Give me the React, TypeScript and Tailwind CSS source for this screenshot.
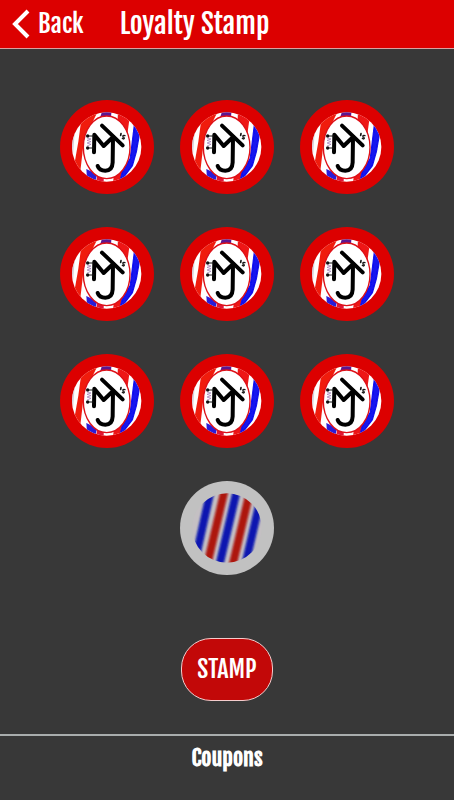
import React from "react";

const FONT =
  "font-['Fjalla_One','Liberation_Sans_Narrow','Roboto_Condensed','Open_Sans_Condensed','Roboto',sans-serif]";

function CollectedStamp({ id }: { id: number }) {
  const clip = `stamp-clip-${id}`;
  const soft = `stamp-soft-${id}`;
  return (
    <svg viewBox="17 15 282 282" className="size-[94px]" role="img" aria-label="Collected stamp">
      <defs>
        <clipPath id={clip}>
          <circle cx="157" cy="156" r="104" />
        </clipPath>
        <filter id={soft} x="-20%" y="-20%" width="140%" height="140%">
          <feGaussianBlur stdDeviation="2" />
        </filter>
      </defs>
      <circle cx="158" cy="156" r="141" fill="#dc0000" />
      <g clipPath={`url(#${clip})`}>
        <rect x="50" y="50" width="216" height="216" fill="#fff" />
        <g filter={`url(#${soft})`}>
          <path d="M84 50 L130 50 L100 110 L86 160 L76 245 L58 220 L72 140 Z" fill="#f01a10" />
          <path d="M50 130 L62 100 L56 180 Z" fill="#d4d0dc" />
          <path d="M146 40 H172 L170 66 H138 Z" fill="#5a1490" />
          <path d="M192 40 H230 L220 110 L208 270 H176 Z" fill="#ee1515" />
          <path d="M240 92 L256 112 L246 170 L234 212 L196 262 L204 230 L228 190 Z" fill="#1212ee" stroke="#1212ee" strokeWidth="4" />
          <path d="M96 222 L128 238 L124 258 L98 250 Z" fill="#2b1cd8" />
          <path d="M128 246 H148 V268 H124 Z" fill="#e01535" />
        </g>
      </g>
      <ellipse cx="157" cy="157" rx="70" ry="94" fill="#fff" stroke="#dd1018" strokeWidth="4" />
      <g fill="none" stroke="#000" strokeWidth="12" strokeLinecap="round" strokeLinejoin="round">
        <path d="M119 172 L120 119 L148 153 L176 126" />
        <path d="M143 92 L205 151" />
        <path d="M176 126 L175 202 Q174 227 153 227 Q135 227 130 213" />
      </g>
      <g fill="none" stroke="#151515" strokeWidth="3" strokeLinecap="round">
        <path d="M98 123 H118 M98 159 H118" />
        <path d="M200 116 L199 121" strokeWidth="5" />
        <path d="M212 122 Q204 120 206 126 Q213 129 208 132 L204 130" strokeWidth="4" />
      </g>
      <circle cx="100" cy="123" r="5" fill="#111" />
      <circle cx="100" cy="159" r="5" fill="#111" />
      <path
        d="M98 129 L110 132 L98 136 L110 140 L98 144 L110 148 L98 153"
        fill="none"
        stroke="#9a72b0"
        strokeWidth="2"
      />
    </svg>
  );
}

function EmptyStamp() {
  return (
    <svg viewBox="17 17 284 284" className="size-[94px]" role="img" aria-label="Empty stamp">
      <defs>
        <clipPath id="pole-clip">
          <circle cx="159" cy="159" r="105" />
        </clipPath>
        <filter id="pole-soft" x="-20%" y="-20%" width="140%" height="140%">
          <feGaussianBlur stdDeviation="3" />
        </filter>
      </defs>
      <circle cx="159" cy="159" r="142" fill="#c1c1c1" />
      <g clipPath="url(#pole-clip)">
        <rect x="50" y="50" width="216" height="216" fill="#c4c0c3" />
        <g filter="url(#pole-soft)" fill="none" strokeWidth="24">
          <path d="M111 40 L62 260" stroke="#0718b0" />
          <path d="M153 40 L97 280" stroke="#ad120b" />
          <path d="M190 40 L134 280" stroke="#0718b0" />
          <path d="M228 50 L174 280" stroke="#ad120b" />
          <path d="M264 55 L213 275" stroke="#0718b0" />
        </g>
      </g>
    </svg>
  );
}

export default function App() {
  return (
    <div className={`flex min-h-screen flex-col bg-[#383838] text-white ${FONT}`}>
      <header className="flex h-[49px] items-center gap-9 border-b border-[#d9a0a0] bg-[#dc0000] pl-3">
        <button type="button" className="flex items-center gap-2 text-[25px] leading-8">
          <svg viewBox="0 0 18 30" className="h-[30px] w-[18px]" fill="none" stroke="#fff" strokeWidth="4" aria-hidden="true">
            <path d="M16 2 L3 15 L16 28" />
          </svg>
          Back
        </button>
        <h1 className="text-[28px] leading-8">Loyalty Stamp</h1>
      </header>

      <main className="flex grow flex-col items-center pt-[51px]">
        <div className="grid grid-cols-3 gap-x-[26px] gap-y-[33px]">
          {Array.from({ length: 9 }, (_, i) => (
            <CollectedStamp key={i} id={i} />
          ))}
          <div className="col-start-2">
            <EmptyStamp />
          </div>
        </div>
        <button
          type="button"
          className="mt-[63px] h-[63px] w-[92px] rounded-[30px] border border-[#f4cccc] bg-[#c20808] pb-0.5 text-[24px] leading-8"
        >
          STAMP
        </button>
      </main>

      <footer className="flex h-[66px] flex-col items-center border-t-2 border-[#a9adad] pt-1.5">
        <a href="#coupons" className="text-[22px] leading-8 font-bold">
          Coupons
        </a>
      </footer>
    </div>
  );
}
